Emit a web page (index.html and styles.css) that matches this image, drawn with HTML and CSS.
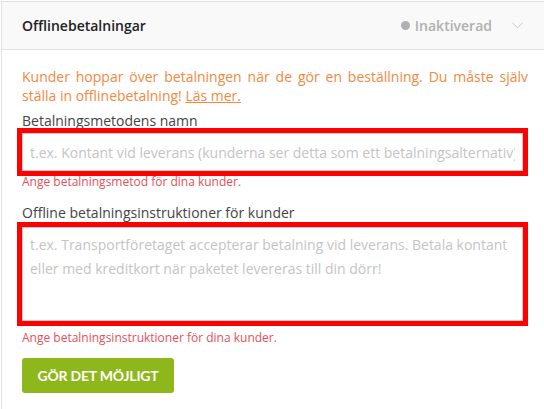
FILE: index.html
```html
<!DOCTYPE html>
<html lang="sv">
<head>
  <meta charset="UTF-8">
  <title>Offlinebetalningar</title>
  <link rel="stylesheet" href="styles.css">
</head>
<body>
  <div class="panel">
    <div class="panel-header">
      <span class="panel-title">Offlinebetalningar</span>
      <span class="status"><span class="status-dot"></span>Inaktiverad</span>
      <svg class="chevron" width="11" height="7" viewBox="0 0 11 7">
        <path d="M0.5 0.8 L5.5 5.8 L10.5 0.8" fill="none" stroke="#c8c8c8" stroke-width="1"/>
      </svg>
    </div>

    <div class="panel-body">
      <p class="notice">Kunder hoppar över betalningen när de gör en beställning. Du måste själv ställa in offlinebetalning! <a href="#">Läs mer.</a></p>

      <label class="field-label" for="metod">Betalningsmetodens namn</label>
      <input id="metod" class="field field-error" placeholder="t.ex. Kontant vid leverans (kunderna ser detta som ett betalningsalternativ)">
      <div class="error-text">Ange betalningsmetod för dina kunder.</div>

      <label class="field-label label-second" for="instr">Offline betalningsinstruktioner för kunder</label>
      <textarea id="instr" class="field field-error area" placeholder="t.ex. Transportföretaget accepterar betalning vid leverans. Betala kontant eller med kreditkort när paketet levereras till din dörr!"></textarea>
      <div class="error-text error-second">Ange betalningsinstruktioner för dina kunder.</div>

      <button class="btn-enable">GÖR DET MÖJLIGT</button>
    </div>
  </div>
</body>
</html>
```

FILE: styles.css
```css
html, body { margin: 0; overflow: hidden; background: #fff; }
body { font-family: "Open Sans", Arial, sans-serif; font-size: 14px; color: #444; }

.panel { margin: 1px 0 0 1px; width: 560px; height: 420px; border: 1px solid #e0e0e0; }
.panel-header { display: flex; align-items: center; height: 47px; padding: 0 39px 0 20px; background: #f9f9f9; border-bottom: 1px solid #e2e2e2; }
.panel-title { font-weight: 600; color: #222; flex: 1; }
.status { display: flex; align-items: center; font-weight: 600; color: #b0b0b0; }
.status-dot { width: 9px; height: 9px; border-radius: 50%; background: #b0b0b0; margin-right: 5px; }
.chevron { margin-left: 20px; }

.panel-body { padding: 17px 20px 0 20px; }
.notice { margin: 0; line-height: 19px; color: #f5883e; width: 506px; text-align: justify; }
.notice a { color: #f5883e; text-decoration: underline; }

.field-label { display: block; margin-top: 6px; line-height: 19px; color: #444; }
.label-second { margin-top: 13px; }

.field { display: block; box-sizing: border-box; width: 501px; border: 1px solid #ccc; font-family: "Open Sans", Arial, sans-serif; font-size: 14px; color: #444; background: #fff; }
.field::placeholder { color: #c4c4c4; }
input.field { height: 38px; margin-top: 3px; padding: 0 7px; }
.area { height: 94px; margin-top: 5px; padding: 5px 7px; line-height: 24px; resize: none; }
.field-error { outline: 5px solid #ff0000; }

.error-text { margin-top: 3px; font-size: 12px; line-height: 16px; color: #e84f58; }
.error-second { margin-top: 9px; }

.btn-enable { display: block; margin-top: 12px; width: 152px; height: 35px; border: none; border-radius: 3px; background: #8eb71b; color: #fff; font-family: Lato, "Open Sans", sans-serif; font-weight: 700; font-size: 14px; letter-spacing: -0.2px; cursor: pointer; }
```
